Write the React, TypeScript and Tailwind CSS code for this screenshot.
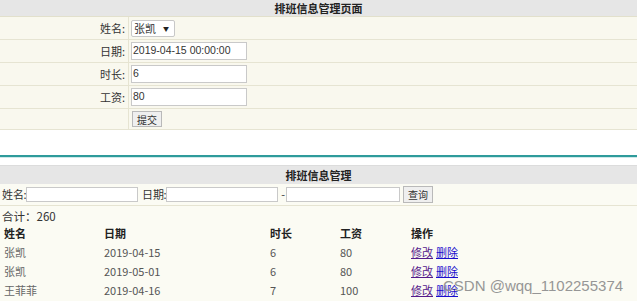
import React from 'react';

const cjk = { fontFamily: '"Noto Sans CJK SC", "Noto Sans", sans-serif' };
const latin = { fontFamily: '"Liberation Sans", "Noto Sans CJK SC", sans-serif' };

const formRows = [
  { label: '姓名:', kind: 'select', value: '张凯' },
  { label: '日期:', kind: 'input', value: '2019-04-15 00:00:00' },
  { label: '时长:', kind: 'input', value: '6' },
  { label: '工资:', kind: 'input', value: '80' },
];

const records = [
  { name: '张凯', date: '2019-04-15', hours: '6', pay: '80' },
  { name: '张凯', date: '2019-05-01', hours: '6', pay: '80' },
  { name: '王菲菲', date: '2019-04-16', hours: '7', pay: '100' },
];

const App: React.FC = () => {
  return (
    <div className="relative w-[637px] h-[301px] overflow-hidden bg-white text-[11px] text-[#333]" style={cjk}>
      {/* 编辑表单 */}
      <div className="h-[17px] bg-[#e6e6e6] flex items-center justify-center font-bold text-[11px] text-[#222] border-b border-[#e2e0cc]">
        排班信息管理页面
      </div>
      <div className="bg-[#f9f8ee]">
        {formRows.map((row) => (
          <div key={row.label} className="flex h-[23px] border-b border-[#e6e4d2]">
            <div className="w-[129px] shrink-0 flex items-center justify-end pr-[3px] border-r border-[#e6e4d2] text-[#333]">
              {row.label}
            </div>
            <div className="flex items-center pl-[2px]">
              {row.kind === 'select' ? (
                <div className="w-[44px] h-[17px] bg-white border border-[#c8c8c8] rounded-[2px] flex items-center justify-between pl-[2px] pr-[5px] text-[11px]">
                  <span>张凯</span>
                  <span className="text-[6px] text-[#222]">▼</span>
                </div>
              ) : (
                <div className="w-[116px] h-[18px] shrink-0 bg-white border border-[#c9c9c9] flex items-center px-[1px] text-[10.5px] text-[#333] whitespace-nowrap" style={latin}>
                  {row.value}
                </div>
              )}
            </div>
          </div>
        ))}
        <div className="flex h-[21px] border-b border-[#e6e4d2]">
          <div className="w-[129px] shrink-0 border-r border-[#e6e4d2]" />
          <div className="flex items-center pl-[3px]">
            <div className="h-[16px] px-[4px] bg-[#efefef] border border-[#b9b9b9] flex items-center text-[10px] text-[#333]">
              提交
            </div>
          </div>
        </div>
      </div>

      <div className="h-[25px]" />
      <div className="h-[2px] bg-[#2e9b9b]" />
      <div className="h-[1px] bg-[#cfe9e9]" />
      <div className="h-[7px]" />

      {/* 列表 */}
      <div className="h-[19px] bg-[#e6e6e6] flex items-center justify-center font-bold text-[11px] text-[#222] border-t border-[#dcdcdc]">
        排班信息管理
      </div>
      <div className="bg-[#fbfbf3] h-[200px]">
        <div className="flex items-center h-[22px] pl-[2px] border-b border-[#e6e4d2]">
          <span>姓名</span>
          <span className="-ml-[0.5px] mr-[-0.5px]">:</span>
          <div className="w-[112px] h-[15px] shrink-0 bg-white border border-[#c9c9c9]" />
          <span className="ml-[4px]">日期</span>
          <span className="-ml-[0.5px] mr-[-0.5px]">:</span>
          <div className="w-[112px] h-[15px] shrink-0 bg-white border border-[#c9c9c9]" />
          <span className="ml-[3px] mr-[1px]">-</span>
          <div className="w-[114px] h-[15px] shrink-0 bg-white border border-[#c9c9c9]" />
          <div className="ml-[3px] h-[17px] px-[4px] bg-[#efefef] border border-[#b9b9b9] flex items-center text-[10px]">
            查询
          </div>
        </div>
        <div className="pl-[2px] pt-[1px] h-[18px] text-[11.5px] text-[#333] leading-[18px]">合计：260</div>
        <div className="grid grid-cols-[100px_166px_70px_71px_1fr] pl-[4px] leading-[19px]">
          <div className="font-bold text-[#222]">姓名</div>
          <div className="font-bold text-[#222]">日期</div>
          <div className="font-bold text-[#222]">时长</div>
          <div className="font-bold text-[#222]">工资</div>
          <div className="font-bold text-[#222]">操作</div>
          {records.map((r, i) => (
            <React.Fragment key={i}>
              <div className="text-[#666]">{r.name}</div>
              <div className="text-[#555]">{r.date}</div>
              <div className="text-[#555]">{r.hours}</div>
              <div className="text-[#555]">{r.pay}</div>
              <div className="flex gap-[3px]">
                <span className="underline text-[#551a8b]">修改</span>
                <span className="underline text-[#1a0dcc]">删除</span>
              </div>
            </React.Fragment>
          ))}
        </div>
      </div>

      <div className="absolute left-[443px] top-[275px] text-[15px] text-[#8c8c8c] opacity-90 whitespace-nowrap" style={{ fontFamily: '"Liberation Sans", sans-serif' }}>
        CSDN @wqq_1102255374
      </div>
    </div>
  );
};

export default App;
